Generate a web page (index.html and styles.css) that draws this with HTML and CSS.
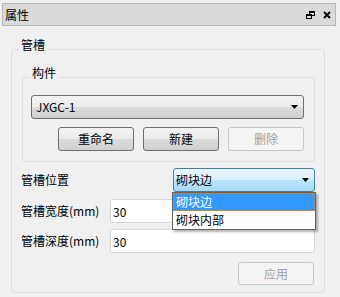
FILE: index.html
```html
<!DOCTYPE html>
<html>
<head>
<meta charset="utf-8">
<link rel="stylesheet" href="styles.css">
</head>
<body>

<div class="dock">
  <div class="titlebar">
    <span class="title">属性</span>
    <svg class="tool" width="9" height="8" viewBox="0 0 9 8">
      <rect x="3" y="0" width="6" height="2" fill="#000"/>
      <rect x="8" y="0" width="1" height="5" fill="#000"/>
      <rect x="6" y="4" width="3" height="1" fill="#000"/>
      <rect x="3" y="0" width="1" height="3" fill="#000"/>
      <rect x="0" y="3" width="6" height="2" fill="#000"/>
      <rect x="0" y="3" width="1" height="5" fill="#000"/>
      <rect x="5" y="3" width="1" height="5" fill="#000"/>
      <rect x="0" y="7" width="6" height="1" fill="#000"/>
    </svg>
    <svg class="tool" width="8" height="8" viewBox="0 0 8 8">
      <path d="M1 1L7 7M7 1L1 7" stroke="#000" stroke-width="1.8"/>
    </svg>
  </div>
</div>

<fieldset class="group outer">
  <legend>管槽</legend>

  <fieldset class="group inner">
    <legend>构件</legend>
    <div class="combo">
      <span class="combo-text">JXGC-1</span>
      <svg class="arrow" width="7" height="4" viewBox="0 0 7 4"><path d="M0 0h7L3.5 4z" fill="#000"/></svg>
    </div>
    <div class="buttons">
      <button class="btn">重命名</button>
      <button class="btn">新建</button>
      <button class="btn" disabled>删除</button>
    </div>
  </fieldset>

  <div class="row first">
    <label>管槽位置</label>
    <div class="combo open">
      <span class="combo-text">砌块边</span>
      <svg class="arrow" width="7" height="4" viewBox="0 0 7 4"><path d="M0 0h7L3.5 4z" fill="#000"/></svg>
      <ul class="popup">
        <li class="sel">砌块边</li>
        <li>砌块内部</li>
      </ul>
    </div>
  </div>
  <div class="row">
    <label>管槽宽度(mm)</label>
    <input class="edit" value="30">
  </div>
  <div class="row">
    <label>管槽深度(mm)</label>
    <input class="edit" value="30">
  </div>

  <div class="actions">
    <button class="btn" disabled>应用</button>
  </div>
</fieldset>

</body>
</html>
```

FILE: styles.css
```css
* {
  box-sizing: border-box;
}

body {
  margin: 0;
  width: 340px;
  height: 297px;
  overflow: hidden;
  background: #f0f0f0;
  font: 12px/16px "Noto Sans CJK SC", "Noto Sans", sans-serif;
  color: #000;
}

/* dock title */
.dock {
  padding: 3px 4px 0 2px;
}

.titlebar {
  display: flex;
  align-items: center;
  height: 23px;
  padding: 0 4px 0 2px;
  border: 1px solid #b8b8b8;
  background: #dadada;
}

.title {
  flex: 1;
}

.tool {
  display: block;
  margin-left: 8px;
}

/* group boxes */
.group {
  margin: 0;
  min-width: 0;
  border: 1px solid #d5dfe5;
  border-radius: 3px;
}

.group > legend {
  padding: 0 2px 8px;
  line-height: 16px;
}

.outer {
  margin: 11px 15px 0 11px;
  padding: 4px 9px 7px 9px;
}

.outer > legend {
  margin-left: -2px;
}

.inner {
  margin: 0 0 0 1px;
  padding: 6px 10px 10px 8px;
}

.inner > legend {
  margin-left: -1px;
}

/* combo boxes */
.combo {
  position: relative;
  display: flex;
  align-items: center;
  height: 24px;
  padding: 0 5px 0 4px;
  border: 1px solid #707070;
  border-radius: 3px;
  background: linear-gradient(#f2f2f2 0%, #ebebeb 50%, #dddddd 50%, #cfcfcf 100%);
}

.combo-text {
  flex: 1;
}

.arrow {
  display: block;
}

.combo.open {
  width: 142px;
  margin-left: auto;
  padding-left: 2px;
  border-color: #3c7fb1;
  background: linear-gradient(#eaf6fd 0%, #d9f0fc 50%, #bee6fd 50%, #a7d9f5 100%);
}

.popup {
  position: absolute;
  left: -2px;
  top: calc(100% + 1px);
  width: 144px;
  margin: 0;
  padding: 0;
  list-style: none;
  border: 1px solid #646464;
  background: #fff;
  box-shadow: 2px 2px 2px rgba(0, 0, 0, 0.3);
}

.popup li {
  height: 18px;
  line-height: 18px;
  padding-left: 3px;
}

.popup .sel {
  background: #3399ff;
  color: #fff;
  outline: 1px dotted #d08a3a;
  outline-offset: -1px;
}

/* push buttons */
.buttons {
  display: flex;
  justify-content: flex-end;
  gap: 9px;
  margin-top: 8px;
}

.btn {
  width: 76px;
  height: 24px;
  padding: 0;
  border: 1px solid #707070;
  border-radius: 3px;
  background: linear-gradient(#f2f2f2 0%, #ebebeb 50%, #dddddd 50%, #cfcfcf 100%);
  font: inherit;
  color: #000;
}

.btn:disabled {
  border-color: #c4c7c9;
  background: #f4f4f4;
  color: #a0a0a0;
}

/* form rows */
.row {
  display: flex;
  align-items: center;
  margin-top: 6px;
}

.row + .row {
  margin-top: 7px;
}

.row + .row + .row {
  margin-top: 6px;
}

.row label {
  flex: none;
  width: 89px;
}

.edit {
  flex: 1;
  min-width: 0;
  height: 24px;
  padding: 0 2px;
  border: 1px solid #d6d9dc;
  border-radius: 2px;
  background: #fff;
  font: inherit;
  color: #000;
}

.actions {
  display: flex;
  justify-content: flex-end;
  margin-top: 9px;
  padding-right: 1px;
}

.actions .btn {
  height: 23px;
}
```
